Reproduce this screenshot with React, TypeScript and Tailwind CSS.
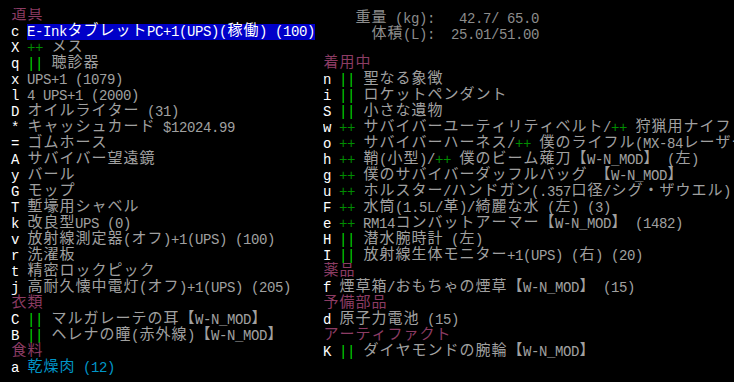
type Seg = { t: string; c: string; bg?: string };

const H = "text-[#8c3c64]";
const W = "text-white";
const G = "text-[#a0a0a0]";
const D = "text-[#8c8c8c]";
const DG = "text-[#008c00]";
const BG = "text-[#00dc00]";
const CY = "text-[#0096c8]";

const wide = (ch: string) => (ch.codePointAt(0) ?? 0) >= 0x1100;

function Cells({ text }: { text: string }) {
    return (
        <>
            {Array.from(text).map((ch, i) =>
                wide(ch) ? (
                    <span key={i} className="w-4 shrink-0 text-center text-[15px] leading-4">
                        {ch}
                    </span>
                ) : (
                    <span key={i} className="w-2 shrink-0 text-center text-[14px] leading-4">
                        {ch === " " ? "\u00a0" : ch}
                    </span>
                )
            )}
        </>
    );
}

function Row({ segs }: { segs: Seg[] }) {
    return (
        <div className="flex h-4 whitespace-nowrap">
            {segs.map((s, i) => (
                <span key={i} className={`flex h-4 shrink-0 ${s.c} ${s.bg ?? ""}`}>
                    <Cells text={s.t} />
                </span>
            ))}
        </div>
    );
}

// helpers for the usual "x || name" shapes
const head = (t: string): Seg[] => [{ t, c: H }];
const item = (k: string, t: string, c = G): Seg[] => [
    { t: k + " ", c: W },
    { t, c },
];
const worn = (k: string, mark: string, t: string): Seg[] => [
    { t: k + " ", c: W },
    { t: mark, c: mark === "++" ? DG : BG },
    { t: " " + t, c: G },
];

const left: Seg[][] = [
    head("道具"),
    [
        { t: "c ", c: W },
        { t: "E-InkタブレットPC+1(UPS)(稼働) (100)", c: W, bg: "bg-[#0000c8]" },
    ],
    worn("X", "++", "メス"),
    worn("q", "||", "聴診器"),
    item("x", "UPS+1 (1079)"),
    item("l", "4 UPS+1 (2000)"),
    item("D", "オイルライター (31)"),
    item("*", "キャッシュカード $12024.99"),
    item("=", "ゴムホース"),
    item("A", "サバイバー望遠鏡"),
    item("y", "バール"),
    item("G", "モップ"),
    item("T", "塹壕用シャベル"),
    item("k", "改良型UPS (0)"),
    item("v", "放射線測定器(オフ)+1(UPS) (100)"),
    item("r", "洗濯板"),
    item("t", "精密ロックピック"),
    item("j", "高耐久懐中電灯(オフ)+1(UPS) (205)"),
    head("衣類"),
    worn("C", "||", "マルガレーテの耳【W-N_MOD】"),
    worn("B", "||", "ヘレナの瞳(赤外線)【W-N_MOD】"),
    head("食料"),
    item("a", "乾燥肉 (12)", CY),
];

const right: Seg[][] = [
    head("着用中"),
    worn("n", "||", "聖なる象徴"),
    worn("i", "||", "ロケットペンダント"),
    worn("S", "||", "小さな遺物"),
    [
        { t: "w ", c: W },
        { t: "++", c: DG },
        { t: " サバイバーユーティリティベルト/", c: G },
        { t: "++", c: DG },
        { t: " 狩猟用ナイフ", c: G },
    ],
    [
        { t: "o ", c: W },
        { t: "++", c: DG },
        { t: " サバイバーハーネス/", c: G },
        { t: "++", c: DG },
        { t: " 僕のライフル(MX-84レーザーライフル)", c: G },
    ],
    [
        { t: "h ", c: W },
        { t: "++", c: DG },
        { t: " 鞘(小型)/", c: G },
        { t: "++", c: DG },
        { t: " 僕のビーム薙刀【W-N_MOD】 (左)", c: G },
    ],
    worn("g", "++", "僕のサバイバーダッフルバッグ 【W-N_MOD】"),
    worn("u", "++", "ホルスター/ハンドガン(.357口径/シグ・ザウエル)"),
    worn("F", "++", "水筒(1.5L/革)/綺麗な水 (左) (3)"),
    worn("e", "++", "RM14コンバットアーマー【W-N_MOD】 (1482)"),
    worn("H", "||", "潜水腕時計 (左)"),
    worn("I", "||", "放射線生体モニター+1(UPS) (右) (20)"),
    head("薬品"),
    item("f", "煙草箱/おもちゃの煙草【W-N_MOD】 (15)"),
    head("予備部品"),
    item("d", "原子力電池 (15)"),
    head("アーティファクト"),
    worn("K", "||", "ダイヤモンドの腕輪【W-N_MOD】"),
];

export default function App() {
    return (
        <div className="w-[734px] h-[382px] overflow-hidden bg-black pt-2 pl-[3px] flex font-['Liberation_Mono','Noto_Sans_CJK_JP',monospace]">
            <div className="w-[320px] shrink-0 overflow-hidden pl-2">
                {left.map((r, i) => (
                    <Row key={i} segs={r} />
                ))}
            </div>
            <div className="flex-1 overflow-hidden">
                {/* weight / volume summary */}
                <div className="h-12 pt-[3px]">
                    <Row segs={[{ t: "    重量 (kg):   42.7/ 65.0", c: D }]} />
                    <Row segs={[{ t: "      体積(L):  25.01/51.00", c: D }]} />
                </div>
                {right.map((r, i) => (
                    <Row key={i} segs={r} />
                ))}
            </div>
        </div>
    );
}
